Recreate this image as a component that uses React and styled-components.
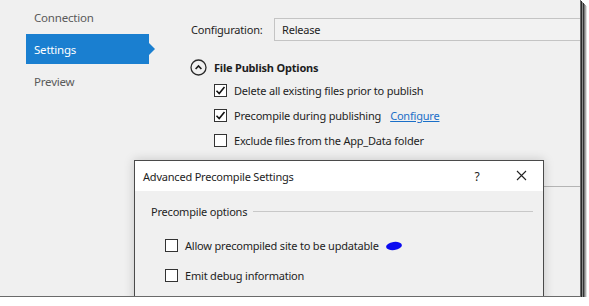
import React from 'react';
import styled, { createGlobalStyle } from 'styled-components';

const Global = createGlobalStyle`
  body {
    margin: 0;
    background: #fff;
    font-family: "Noto Sans", "Open Sans", sans-serif;
    font-size: 11px;
    letter-spacing: -0.2px;
    color: #1e1e1e;
  }
`;

const Frame = styled.div`
  position: relative;
  width: 580px;
  height: 296px;
  background: #f0f0f0;
  overflow: hidden;
  display: flex;
  border-right: 1px solid #6a6a6a;
  border-bottom: 1px solid #6a6a6a;
  box-shadow: 1px 1px 0 #2a2a2a, 2px 2px 0 #8a8a8a, 3px 3px 0 #333, 4px 4px 0 #7a7a7a,
    5px 5px 0 #aaa, 6px 6px 0 #ddd;
`;

const Sidebar = styled.ul`
  list-style: none;
  margin: 0;
  padding: 2px 0 0 26px;
  width: 156px;
  display: flex;
  flex-direction: column;
  gap: 2px;
  flex-shrink: 0;
`;

const NavItem = styled.li`
  position: relative;
  width: 123px;
  height: 30px;
  box-sizing: border-box;
  padding-left: 8px;
  display: flex;
  align-items: center;
  font-size: 11.5px;
  color: ${p => (p.$active ? '#fff' : '#5a5a5a')};
  background: ${p => (p.$active ? '#1a7fd0' : 'transparent')};

  ${p =>
    p.$active &&
    `
    &::after {
      content: '';
      position: absolute;
      right: -6px;
      top: 9px;
      border-top: 6px solid transparent;
      border-bottom: 6px solid transparent;
      border-left: 6px solid #1a7fd0;
    }
  `}
`;

const Main = styled.div`
  flex: 1;
  padding: 18px 0 0 9px;
  display: flex;
  flex-direction: column;
  min-width: 0;
`;

const ConfigRow = styled.div`
  display: flex;
  align-items: center;
  height: 23px;
`;

const ConfigLabel = styled.span`
  width: 83px;
  flex-shrink: 0;
`;

const Select = styled.div`
  flex: 1;
  height: 23px;
  box-sizing: border-box;
  border: 1px solid #c4c4c4;
  border-right: none;
  background: #f2f2f2;
  display: flex;
  align-items: center;
  padding-left: 7px;
`;

const SectionHead = styled.div`
  display: flex;
  align-items: center;
  gap: 7px;
  margin-top: 18px;
  margin-left: -1px;
  font-weight: 700;
`;

const Options = styled.div`
  display: flex;
  flex-direction: column;
  gap: 10px;
  margin: 7px 0 0 23px;
`;

const CheckRow = styled.label`
  display: flex;
  align-items: center;
  gap: 7px;
  height: 15px;
`;

const Box = styled.span`
  width: 13px;
  height: 13px;
  box-sizing: border-box;
  border: 1px solid #333;
  background: #fff;
  flex-shrink: 0;
  display: flex;
  align-items: center;
  justify-content: center;
`;

const Link = styled.a`
  color: #1a6fc8;
  text-decoration: underline;
  margin-left: 2px;
`;

const Separator = styled.div`
  height: 1px;
  background: #b4b4b4;
  margin-top: 38px;
`;

const Dialog = styled.div`
  position: absolute;
  left: 134px;
  top: 160px;
  width: 410px;
  height: 160px;
  box-sizing: border-box;
  border: 1px solid #4a4a4a;
  background: #f0f0f0;
  box-shadow: 0 0 10px rgba(0, 0, 0, 0.18);
`;

const TitleBar = styled.div`
  height: 30px;
  background: #fff;
  display: flex;
  align-items: center;
  padding-left: 8px;
`;

const Title = styled.span`
  flex: 1;
`;

const TitleButton = styled.span`
  width: 44px;
  text-align: center;
  font-size: 12px;
  color: #222;
`;

const DialogBody = styled.div`
  padding: 13px 10px 0 16px;
`;

const GroupHead = styled.div`
  display: flex;
  align-items: center;
  gap: 6px;

  &::after {
    content: '';
    flex: 1;
    height: 1px;
    background: #c8c8c8;
  }
`;

const GroupOptions = styled.div`
  display: flex;
  flex-direction: column;
  gap: 15px;
  margin: 19px 0 0 14px;
`;

const Blob = styled.span`
  display: inline-block;
  width: 16px;
  height: 8px;
  border-radius: 50%;
  background: #0a0af0;
  margin-left: 0;
  transform: rotate(-8deg);
`;

const Check = () => (
  <svg width="11" height="11" viewBox="0 0 11 11">
    <path d="M1.5 5.8 L4.2 8.5 L9.5 2" fill="none" stroke="#111" strokeWidth="1.6" />
  </svg>
);

const CollapseIcon = () => (
  <svg width="17" height="17" viewBox="0 0 17 17">
    <circle cx="8.5" cy="8.5" r="7.5" fill="none" stroke="#2a2a2a" strokeWidth="1.3" />
    <path d="M5.6 10 L8.5 7 L11.4 10" fill="none" stroke="#1a1a1a" strokeWidth="1.6" />
  </svg>
);

const CloseIcon = () => (
  <svg width="11" height="11" viewBox="0 0 11 11">
    <path d="M1 1 L10 10 M10 1 L1 10" stroke="#222" strokeWidth="1.1" />
  </svg>
);

export default function App() {
  return (
    <>
      <Global />
      <Frame>
        <Sidebar>
          <NavItem>Connection</NavItem>
          <NavItem $active>Settings</NavItem>
          <NavItem>Preview</NavItem>
        </Sidebar>
        <Main>
          <ConfigRow>
            <ConfigLabel>Configuration:</ConfigLabel>
            <Select>Release</Select>
          </ConfigRow>
          <SectionHead>
            <CollapseIcon />
            File Publish Options
          </SectionHead>
          <Options>
            <CheckRow>
              <Box><Check /></Box>
              Delete all existing files prior to publish
            </CheckRow>
            <CheckRow>
              <Box><Check /></Box>
              Precompile during publishing
              <Link>Configure</Link>
            </CheckRow>
            <CheckRow>
              <Box />
              Exclude files from the App_Data folder
            </CheckRow>
          </Options>
          <Separator />
        </Main>
        <Dialog>
          <TitleBar>
            <Title>Advanced Precompile Settings</Title>
            <TitleButton>?</TitleButton>
            <TitleButton><CloseIcon /></TitleButton>
          </TitleBar>
          <DialogBody>
            <GroupHead>Precompile options</GroupHead>
            <GroupOptions>
              <CheckRow>
                <Box />
                Allow precompiled site to be updatable
                <Blob />
              </CheckRow>
              <CheckRow>
                <Box />
                Emit debug information
              </CheckRow>
            </GroupOptions>
          </DialogBody>
        </Dialog>
      </Frame>
    </>
  );
}
